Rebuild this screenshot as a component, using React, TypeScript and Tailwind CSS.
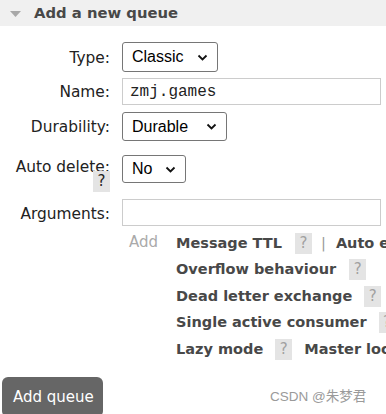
import React from 'react';

const verdana = { fontFamily: '"DejaVu Sans", Verdana, sans-serif' };

function Chevron() {
  return (
    <svg width="11" height="7" viewBox="0 0 11 7" className="ml-auto">
      <path d="M1.5 1.5 L5.5 5.5 L9.5 1.5" fill="none" stroke="#111" strokeWidth="1.8" />
    </svg>
  );
}

function FakeSelect({ value, width, height }: { value: string; width: string; height: string }) {
  return (
    <div
      className={`flex items-center ${width} ${height} border border-[#767676] rounded-[3px] bg-white pl-[9px] pr-[9px] text-[16px] text-black font-['Liberation_Sans',Arial,sans-serif]`}
    >
      <span>{value}</span>
      <Chevron />
    </div>
  );
}

function Help({ dark }: { dark?: boolean }) {
  return (
    <span
      className={`inline-flex w-[17px] h-[21px] items-center justify-center bg-[#e4e4e4] text-[15px] font-normal leading-none ${dark ? 'text-[#222]' : 'text-[#a0a0a0]'}`}
    >
      ?
    </span>
  );
}

function Row({ label, children, className }: { label: React.ReactNode; children: React.ReactNode; className?: string }) {
  return (
    <div className={`flex items-center ${className ?? ''}`}>
      <div className="w-[110px] shrink-0 text-right text-[15.4px] text-[#222] pt-[3px]">{label}</div>
      <div className="ml-[12px]">{children}</div>
    </div>
  );
}

export default function App() {
  return (
    <div className="relative w-[386px] h-[414px] overflow-hidden bg-white" style={verdana}>
      {/* Section header */}
      <div className="flex items-center h-[26px] bg-[#f0f0f0]">
        <svg width="11" height="6" viewBox="0 0 11 6" className="ml-[10px] mt-[1px]">
          <path d="M0 0 L11 0 L5.5 6 Z" fill="#a8a8a8" />
        </svg>
        <span className="ml-[13px] text-[14.8px] font-bold text-[#484848]">Add a new queue</span>
      </div>

      <div className="pt-[16px]">
        <Row label="Type:">
          <FakeSelect value="Classic" width="w-[96px]" height="h-[30px]" />
        </Row>

        <Row label="Name:" className="mt-[6px]">
          <div className="flex items-center w-[259px] h-[27px] border border-[#cccccc] pl-[7px] text-[16px] text-[#222] font-['Liberation_Mono','Courier_New',monospace]">
            zmj.games
          </div>
        </Row>

        <Row label="Durability:" className="mt-[7px]">
          <FakeSelect value="Durable" width="w-[105px]" height="h-[29px]" />
        </Row>

        <div className="flex items-start mt-[14px]">
          <div className="w-[110px] shrink-0 flex flex-col items-end text-[15.4px] text-[#222]">
            <span className="whitespace-nowrap leading-[18px] mt-[3px]">Auto delete:</span>
            <span className="-mt-[6px]">
              <Help dark />
            </span>
          </div>
          <div className="ml-[12px]">
            <FakeSelect value="No" width="w-[64px]" height="h-[28px]" />
          </div>
        </div>

        <Row label="Arguments:" className="mt-[6px]">
          <div className="w-[259px] h-[27px] border border-[#cccccc]" />
        </Row>

        <div className="flex mt-[6px] whitespace-nowrap">
          <div className="w-[129px] shrink-0" />
          <span className="text-[15px] text-[#aaaaaa] leading-[21px]">Add</span>
          <div className="ml-[18px] flex flex-col gap-[5.5px] text-[14.5px] font-bold text-[#484848]">
            <div className="flex items-center h-[21px] mt-[1px]">
              <span>Message TTL</span>
              <span className="ml-[13px]"><Help /></span>
              <span className="ml-[9px] font-normal text-[#999]">|</span>
              <span className="ml-[10px]">Auto expire</span>
            </div>
            <div className="flex items-center h-[21px]">
              <span>Overflow behaviour</span>
              <span className="ml-[13px]"><Help /></span>
            </div>
            <div className="flex items-center h-[21px]">
              <span>Dead letter exchange</span>
              <span className="ml-[12px]"><Help /></span>
            </div>
            <div className="flex items-center h-[21px]">
              <span>Single active consumer</span>
              <span className="ml-[12px]"><Help /></span>
            </div>
            <div className="flex items-center h-[21px]">
              <span>Lazy mode</span>
              <span className="ml-[12px]"><Help /></span>
              <span className="ml-[12px]">Master locator</span>
            </div>
          </div>
        </div>

        <button className="mt-[17px] ml-[2px] w-[101px] h-[40px] rounded-[6px] bg-[#666666] text-white text-[15px] text-left pl-[11px]">
          Add queue
        </button>
      </div>

      {/* CSDN watermark */}
      <div className="absolute left-[270px] top-[387px] text-[13.5px] text-[#9a9a9a] font-['Liberation_Sans','Noto_Sans_CJK_SC',sans-serif]">
        CSDN @朱梦君
      </div>
    </div>
  );
}
